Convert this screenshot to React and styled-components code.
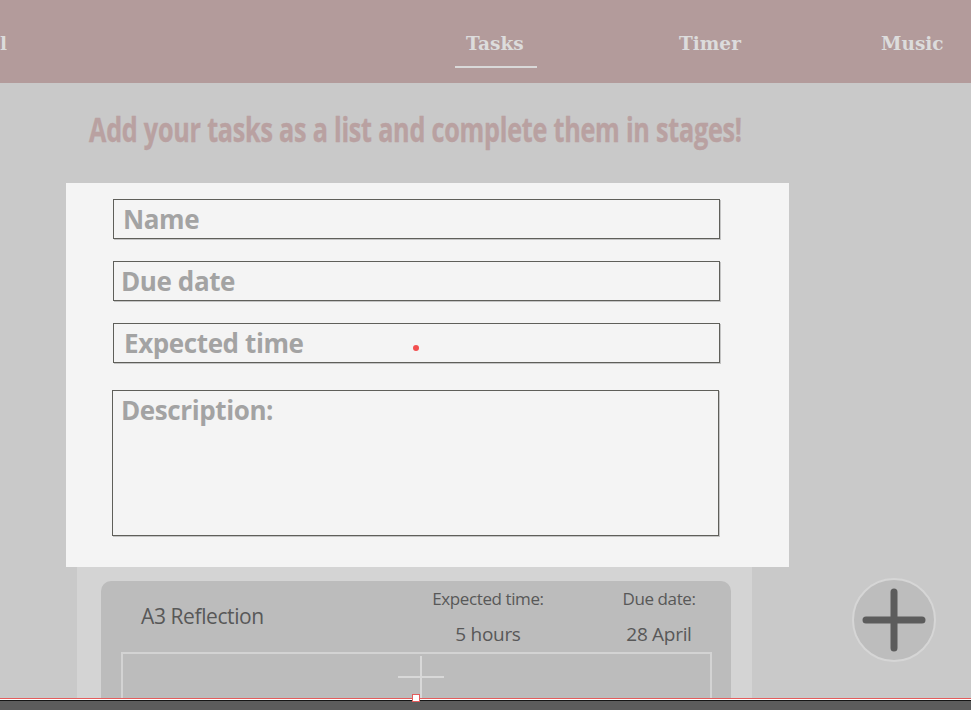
import React from "react";
import styled, { createGlobalStyle } from "styled-components";

const Global = createGlobalStyle`
  html, body { margin: 0; padding: 0; }
  body { background: #c9c9c9; overflow: hidden; }
  * { box-sizing: border-box; }
`;

const Page = styled.div`
  width: 971px;
  height: 710px;
  display: flex;
  flex-direction: column;
  background: #c9c9c9;
  overflow: hidden;
`;

const Header = styled.header`
  height: 83px;
  flex: none;
  background: #b39b9b;
  display: flex;
  align-items: flex-start;
  font-family: "DejaVu Serif", "Liberation Serif", serif;
  font-weight: 700;
  font-size: 18.5px;
  line-height: 22px;
  color: #dcdcdc;
`;

const Brand = styled.div`
  width: 9px;
  margin-top: 33px;
  white-space: nowrap;
`;

const Nav = styled.nav`
  margin-left: 457px;
  margin-top: 33px;
  display: grid;
  grid-template-columns: 213px 202px auto;
`;

const NavItem = styled.a`
  position: relative;
  color: #dcdcdc;
  text-decoration: none;
  white-space: nowrap;
  ${(p) =>
    p.$active &&
    `
    &::after {
      content: "";
      position: absolute;
      left: -11px;
      width: 82px;
      top: 33px;
      height: 2px;
      background: #d9d9d9;
    }
  `}
`;

const Main = styled.main`
  flex: 1;
  position: relative;
  overflow: hidden;
`;

const Column = styled.div`
  margin-left: 66px;
  width: 723px;
  display: flex;
  flex-direction: column;
`;

const Heading = styled.h1`
  margin: 26px 0 34px 23px;
  font-family: "Open Sans", "Noto Sans", sans-serif;
  font-weight: 700;
  font-size: 34px;
  line-height: 40px;
  color: #b9a1a1;
  white-space: nowrap;
  display: inline-block;
  transform: scaleX(0.74);
  transform-origin: left center;
  letter-spacing: -0.3px;
  -webkit-text-stroke: 0.4px #b9a1a1;
`;

const Modal = styled.form`
  background: #f4f4f4;
  padding: 16px 0 31px 47px;
  display: flex;
  flex-direction: column;
`;

const Field = styled.div`
  position: relative;
  width: 607px;
  height: ${(p) => (p.$tall ? 146 : 40)}px;
  margin-top: ${(p) => p.$top || 0}px;
  margin-left: ${(p) => p.$shift || 0}px;
  border: 1px solid #5f5f5a;
  box-shadow: 1px 1px 0 #c4c4c4;
  display: flex;
  align-items: ${(p) => (p.$tall ? "flex-start" : "center")};
  padding-top: ${(p) => (p.$tall ? 6 : 0)}px;
  padding-left: ${(p) => p.$indent || 8}px;
`;

const Placeholder = styled.span`
  font-family: "Open Sans", "Noto Sans", sans-serif;
  font-weight: 700;
  font-size: 26px;
  line-height: 26px;
  color: #a3a3a3;
  letter-spacing: -0.4px;
  white-space: nowrap;
`;

const Cursor = styled.span`
  position: absolute;
  left: 299px;
  top: 21px;
  width: 6px;
  height: 6px;
  border-radius: 50%;
  background: #f24f4f;
`;

const ListPanel = styled.section`
  margin-left: 11px;
  width: 675px;
  height: 200px;
  background: #d4d4d4;
  padding: 14px 21px 0 24px;
`;

const Card = styled.article`
  background: #bcbcbc;
  border-radius: 10px 10px 0 0;
  height: 200px;
  padding: 0 19px 0 20px;
`;

const CardHeader = styled.div`
  height: 71px;
  display: grid;
  grid-template-columns: 1fr 130px 100px;
  column-gap: 56px;
  padding: 8px 3px 0 20px;
  font-family: "Open Sans", "Noto Sans", sans-serif;
  color: #585858;
`;

const Title = styled.div`
  margin-top: 15px;
  font-size: 21px;
  line-height: 24px;
  letter-spacing: -0.4px;
  white-space: nowrap;
`;

const Meta = styled.div`
  display: flex;
  flex-direction: column;
  align-items: center;
  white-space: nowrap;
`;

const MetaLabel = styled.div`
  font-size: 17px;
  line-height: 20px;
  letter-spacing: -0.4px;
`;

const MetaValue = styled.div`
  margin-top: 14px;
  font-size: 19px;
  line-height: 22px;
  letter-spacing: -0.3px;
`;

const Subtasks = styled.div`
  height: 80px;
  border: 2px solid #d3d3d3;
  position: relative;
`;

const AddSubtask = styled.svg`
  position: absolute;
  left: 274px;
  top: 2px;
`;

const Fab = styled.button`
  position: absolute;
  left: 852px;
  top: 495px;
  width: 84px;
  height: 84px;
  border-radius: 50%;
  background: #bdbdbd;
  border: 2px solid #d6d6d6;
  padding: 0;
  display: flex;
  align-items: center;
  justify-content: center;
`;

const BottomBar = styled.div`
  height: 12px;
  flex: none;
  position: relative;
  border-top: 1px solid #e35c5c;
  background: linear-gradient(#ffffff 0 1px, #151515 1px 2px, #5c5c5c 2px);
`;

const Handle = styled.span`
  position: absolute;
  left: 412px;
  top: -5px;
  width: 8px;
  height: 8px;
  background: #ffffff;
  border: 1px solid #e35c5c;
`;

export default function App() {
  return (
    <Page>
      <Global />
      <Header>
        <Brand>l</Brand>
        <Nav>
          <NavItem $active>Tasks</NavItem>
          <NavItem>Timer</NavItem>
          <NavItem>Music</NavItem>
        </Nav>
      </Header>
      <Main>
        <Column>
          <div>
            <Heading>Add your tasks as a list and complete them in stages!</Heading>
          </div>
          <Modal>
            <Field $indent={9}>
              <Placeholder>Name</Placeholder>
            </Field>
            <Field $top={22} $indent={7}>
              <Placeholder>Due date</Placeholder>
            </Field>
            <Field $top={22} $indent={10}>
              <Placeholder>Expected time</Placeholder>
              <Cursor />
            </Field>
            <Field $top={27} $shift={-1} $tall $indent={8}>
              <Placeholder>Description:</Placeholder>
            </Field>
          </Modal>
          <ListPanel>
            <Card>
              <CardHeader>
                <Title>A3 Reflection</Title>
                <Meta>
                  <MetaLabel>Expected time:</MetaLabel>
                  <MetaValue>5 hours</MetaValue>
                </Meta>
                <Meta>
                  <MetaLabel>Due date:</MetaLabel>
                  <MetaValue>28 April</MetaValue>
                </Meta>
              </CardHeader>
              <Subtasks>
                <AddSubtask width="48" height="48" viewBox="0 0 48 48">
                  <path d="M24 0 V48 M1 21 H47" stroke="#d8d8d8" strokeWidth="2" fill="none" />
                </AddSubtask>
              </Subtasks>
            </Card>
          </ListPanel>
        </Column>
        <Fab aria-label="Add task">
          <svg width="64" height="64" viewBox="0 0 64 64">
            <path
              d="M32 4 V60 M4 32 H60"
              stroke="#5c5c5c"
              strokeWidth="7"
              strokeLinecap="round"
              fill="none"
            />
          </svg>
        </Fab>
      </Main>
      <BottomBar>
        <Handle />
      </BottomBar>
    </Page>
  );
}
